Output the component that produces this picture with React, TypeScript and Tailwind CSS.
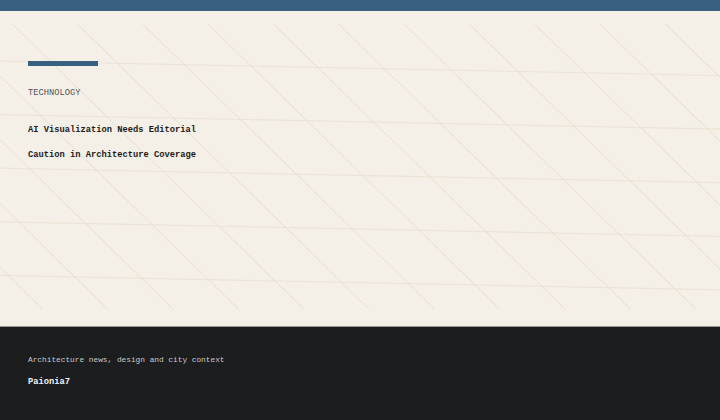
import React from 'react';

const mono = { fontFamily: '"Liberation Mono", "DejaVu Sans Mono", monospace' };

// skewed drafting grid behind the article block
function GridBackdrop() {
  const step = 65.33;
  const diagonals = Array.from({ length: 18 }, (_, i) => i - 6);
  const rows = [0, 1, 2, 3, 4];

  return (
    <svg
      className="absolute inset-0 pointer-events-none"
      width="720"
      height="315"
      viewBox="0 0 720 315"
      aria-hidden="true"
    >
      <defs>
        <clipPath id="grid-clip">
          <rect x="0" y="13" width="720" height="285.3" />
        </clipPath>
      </defs>
      <g clipPath="url(#grid-clip)" fill="none">
        {rows.map(k => {
          const y = 50 + 53.6 * k;
          return <line key={`h${k}`} x1="0" y1={y} x2="720" y2={y + 14.5} stroke="#ece4d7" strokeWidth="1.2" />;
        })}
        {diagonals.map(i => {
          const x = 12 + step * i;
          return <line key={`d${i}`} x1={x} y1="13" x2={x + 292} y2="298.3" stroke="#e6ddcf" strokeWidth="0.9" />;
        })}
      </g>
    </svg>
  );
}

export default function App() {
  return (
    <div className="w-[720px] h-[420px] flex flex-col bg-[#f4f0e8] overflow-hidden" style={mono}>
      <div className="h-[11px] bg-[#365f80] shrink-0" />

      <main className="relative h-[315px] shrink-0">
        <GridBackdrop />
        <div className="relative px-[28px] pt-[50px]">
          <div className="w-[70px] h-[5px] bg-[#365f80]" />
          <div className="mt-[21px] text-[8.75px] leading-[12px] text-[#555555]">TECHNOLOGY</div>
          <h1 className="mt-[19px] text-[8.75px] leading-[24.5px] font-bold text-[#1c1c1c] w-[180px]">
            AI Visualization Needs Editorial Caution in Architecture Coverage
          </h1>
        </div>
      </main>

      <footer className="flex-1 bg-[#1c1d1f] border-t border-[#9d988f] px-[28px] pt-[27px]">
        <p className="text-[7.8px] leading-[12px] text-[#c9c9c9]">Architecture news, design and city context</p>
        <p className="mt-[10px] text-[8.75px] leading-[12px] font-bold text-[#f2f2f2]">Paionia7</p>
      </footer>
    </div>
  );
}
